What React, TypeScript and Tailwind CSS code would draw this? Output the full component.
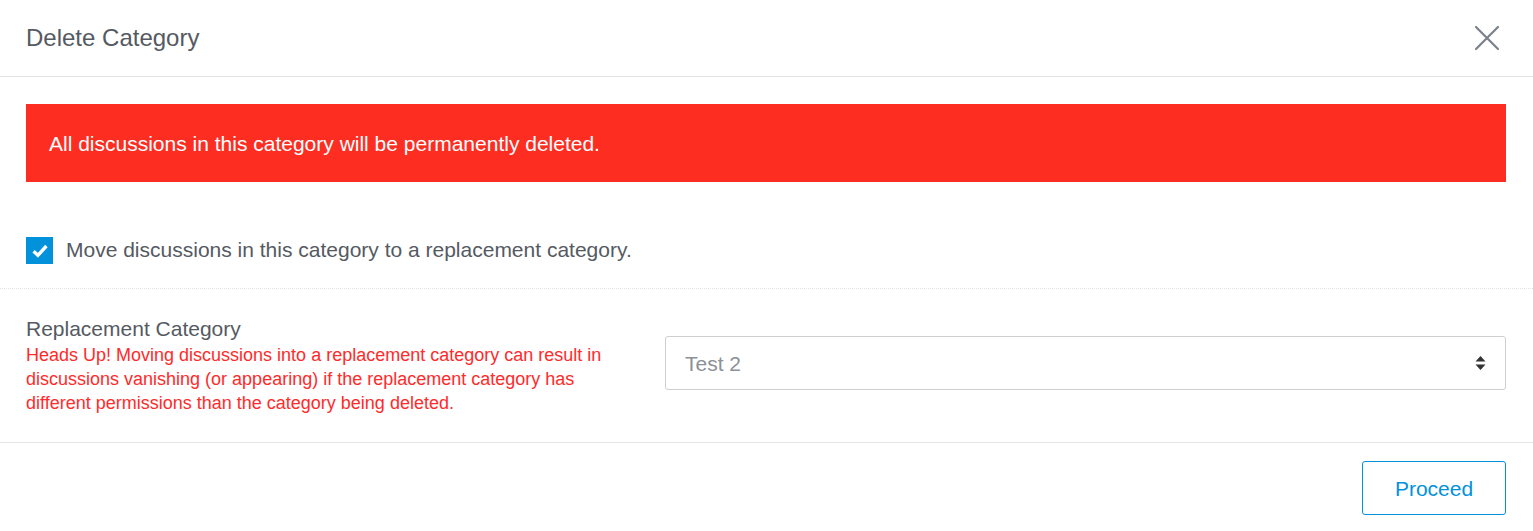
import React from 'react';

function CloseIcon() {
    return (
        <svg width="26" height="26" viewBox="0 0 26 26" fill="none">
            <path d="M2 2L24 24M24 2L2 24" stroke="#7b8089" strokeWidth="2.2" strokeLinecap="round"/>
        </svg>
    );
}

function SortIcon() {
    return (
        <svg width="11" height="16" viewBox="0 0 11 16">
            <path d="M5.5 1L10.5 6.5H0.5Z" fill="#333"/>
            <path d="M5.5 15L10.5 9.5H0.5Z" fill="#333"/>
        </svg>
    );
}

function CheckBox() {
    return (
        <span className="flex h-[27px] w-[27px] items-center justify-center bg-[#0291db]">
            <svg width="16" height="14" viewBox="0 0 16 14">
                <path d="M1.6 7.2L5.9 11.3L14.4 2" stroke="#fff" strokeWidth="3.4" fill="none"/>
            </svg>
        </span>
    );
}

export default function App() {
    return (
        <div className="h-[531px] w-[1533px] overflow-hidden bg-white font-['Liberation_Sans',Arial,sans-serif]">
            <div className="flex h-[77px] items-center justify-between border-b border-[#e4e4e4] pl-[26px] pr-[33px]">
                <h1 className="text-[24px] leading-none text-[#555a62]">Delete Category</h1>
                <CloseIcon/>
            </div>

            <div className="pl-[26px] pr-[27px] pt-[27px]">
                <div className="flex h-[78px] items-center bg-[#fd2d22] px-[23px] pt-[2px] text-[21px] text-white">
                    All discussions in this category will be permanently deleted.
                </div>
                <label className="mt-[55px] flex h-[27px] items-center gap-[13px]">
                    <CheckBox/>
                    <span className="-mt-[2px] text-[21px] text-[#555a62]">Move discussions in this category to a replacement category.</span>
                </label>
            </div>

            <div className="mt-[24px] border-t border-dotted border-[#e2e2e2]"/>

            <div className="flex items-center pb-[27px] pl-[26px] pr-[27px] pt-[28px]">
                <div className="w-[639px] shrink-0 pr-[24px]">
                    <div className="text-[21px] leading-[24px] text-[#555a62]">Replacement Category</div>
                    <p className="mt-[2px] text-[18px] leading-[24px] text-[#ff2b2b]">
                        Heads Up! Moving discussions into a replacement category can result in discussions vanishing
                        (or appearing) if the replacement category has different permissions than the category being
                        deleted.
                    </p>
                </div>
                <div className="-mt-[6px] flex h-[54px] flex-1 items-center justify-between rounded-[3px] border border-[#cfcfcf] pl-[19px] pr-[19px]">
                    <span className="pt-[2px] text-[21px] text-[#8c9097]">Test 2</span>
                    <SortIcon/>
                </div>
            </div>

            <div className="border-t border-[#e4e4e4]"/>

            <div className="flex justify-end pl-[27px] pr-[27px] pt-[18px]">
                <button className="h-[54px] w-[144px] rounded-[3px] border border-[#0291db] pt-[2px] text-[21px] text-[#0291db]">
                    Proceed
                </button>
            </div>
        </div>
    );
}
